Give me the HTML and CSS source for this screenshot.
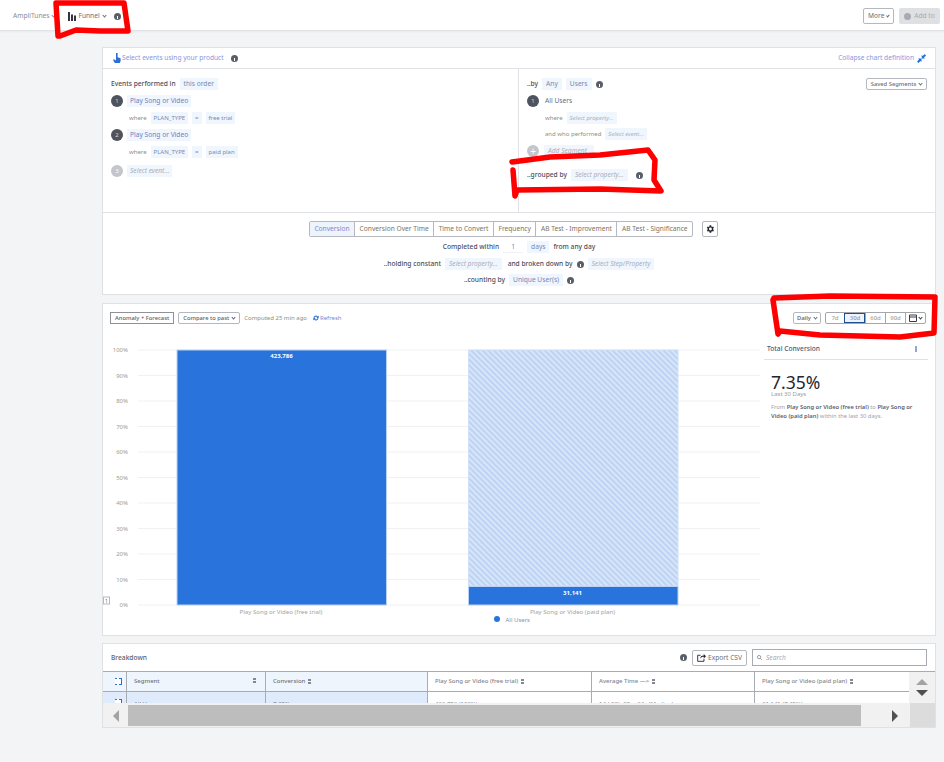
FILE: index.html
```html
<!DOCTYPE html>
<html lang="en">
<head>
<meta charset="utf-8">
<title>Funnel</title>
<link rel="stylesheet" href="styles.css">
</head>
<body>
<header class="topbar">
  <div class="crumbs">
    <span class="crumb">AmpliTunes <i class="caret"></i></span>
    <span class="crumb crumb-main">
      <svg class="funnel-ico" width="8" height="9" viewBox="0 0 8 9"><rect x="0" y="0" width="2" height="9" fill="#33363f"/><rect x="3" y="2.500" width="2" height="6.500" fill="#33363f"/><rect x="6" y="3.500" width="2" height="5.500" fill="#33363f"/></svg>
      Funnel <i class="caret"></i>
    </span>
    <span class="info"></span>
  </div>
  <div class="top-actions">
    <button class="btn btn-more">More <i class="caret"></i></button>
    <button class="btn btn-add"><span class="plus-dot"></span>Add to</button>
  </div>
</header>

<main class="main">
  <section class="card def">
    <div class="def-head">
      <div class="hint">
        <svg width="8" height="10" viewBox="0 0 8 10"><path d="M3 0h1.600v4.200l3 1V8.200L6.800 10H1.800L0 6.800l1-.6 2 1.400z" fill="#2a6fd6"/></svg>
        <span>Select events using your product</span>
        <span class="info hint-info"></span>
      </div>
      <div class="collapse">
        <span>Collapse chart definition</span>
        <svg width="9" height="9" viewBox="0 0 9 9"><path d="M0 7.500l2-2-1-1h3.500V8l-1-1-2 2zM9 1.500l-2 2 1 1H4.700V1l1 1 2-2z" fill="#2a6fd6"/></svg>
      </div>
    </div>
    <div class="def-body">
      <div class="events">
        <div class="line line-title"><b class="lbl">Events performed in</b><span class="chip">this order</span></div>
        <div class="step"><span class="num">1</span><span class="chip chip-lg">Play Song or Video</span></div>
        <div class="where"><em class="kw">where</em><span class="chip chip-sm">PLAN_TYPE</span><span class="chip chip-sm">=</span><span class="chip chip-sm">free trial</span></div>
        <div class="step"><span class="num">2</span><span class="chip chip-lg">Play Song or Video</span></div>
        <div class="where"><em class="kw">where</em><span class="chip chip-sm">PLAN_TYPE</span><span class="chip chip-sm">=</span><span class="chip chip-sm">paid plan</span></div>
        <div class="step step-off"><span class="num num-off">3</span><span class="chip chip-lg chip-ghost">Select event...</span></div>
      </div>
      <div class="segments">
        <div class="seg-top">
          <div class="line line-title"><b class="lbl">..by</b><span class="chip">Any</span><span class="chip">Users</span><span class="info"></span></div>
          <button class="btn btn-saved">Saved Segments <i class="caret"></i></button>
        </div>
        <div class="step step-user"><span class="num">1</span><span class="plain">All Users</span></div>
        <div class="where where-seg"><em class="kw">where</em><span class="chip chip-sm chip-ghost">Select property...</span></div>
        <div class="where where-seg"><em class="kw">and who performed</em><span class="chip chip-sm chip-ghost">Select event...</span></div>
        <div class="step step-add"><span class="num num-off num-plus">+</span><span class="chip chip-lg chip-ghost chip-add">Add Segment</span></div>
        <div class="line line-group"><b class="lbl">..grouped by</b><span class="chip chip-ghost chip-prop">Select property...</span><span class="info"></span></div>
      </div>
    </div>
    <div class="def-foot">
      <div class="tabs-row">
        <div class="tabs">
          <span class="tab tab-on">Conversion</span><span class="tab">Conversion Over Time</span><span class="tab">Time to Convert</span><span class="tab">Frequency</span><span class="tab">AB Test - Improvement</span><span class="tab">AB Test - Significance</span>
        </div>
        <button class="btn btn-cog"><svg width="10" height="10" viewBox="0 0 24 24"><path fill="#23262e" d="M19.400 13a7.500 7.500 0 0 0 0-2l2.100-1.600-2-3.500-2.500 1a7.500 7.500 0 0 0-1.700-1L15 3.200h-4l-.4 2.700a7.500 7.500 0 0 0-1.700 1l-2.500-1-2 3.500L6.500 11a7.500 7.500 0 0 0 0 2l-2.100 1.600 2 3.500 2.500-1a7.500 7.500 0 0 0 1.700 1l.4 2.700h4l.4-2.700a7.500 7.500 0 0 0 1.700-1l2.500 1 2-3.500zM13 15.500a3.500 3.500 0 1 1 0-7 3.500 3.500 0 0 1 0 7z"/></svg></button>
      </div>
      <div class="foot-line line-a"><b class="lbl">Completed within</b><span class="num-input">1</span><span class="chip">days</span><b class="lbl">from any day</b></div>
      <div class="foot-line line-b"><b class="lbl">..holding constant</b><span class="chip chip-ghost">Select property...</span><b class="lbl lbl-gap">and broken down by</b><span class="info"></span><span class="chip chip-ghost">Select Step/Property</span></div>
      <div class="foot-line line-c"><b class="lbl">..counting by</b><span class="chip">Unique User(s)</span><span class="info"></span></div>
    </div>
  </section>

  <section class="card result">
    <div class="toolbar">
      <div class="tool-left">
        <button class="btn btn-tool">Anomaly + Forecast</button>
        <button class="btn btn-tool btn-light">Compare to past <i class="caret"></i></button>
        <span class="computed">Computed 25 min ago</span>
        <span class="refresh"><svg width="6" height="6" viewBox="0 0 10 10"><path d="M1 5a4 4 0 0 1 7-2.600L9.500 1v4h-4l1.400-1.400A2.500 2.500 0 0 0 2.500 5zM9 5a4 4 0 0 1-7 2.600L.5 9V5h4L3.100 6.400A2.500 2.500 0 0 0 7.500 5z" fill="#2a6fd6"/></svg>Refresh</span>
      </div>
      <div class="tool-right">
        <button class="btn btn-daily">Daily <i class="caret"></i></button>
        <div class="ranges">
          <span class="range">7d</span><span class="range range-on">30d</span><span class="range">60d</span><span class="range">90d</span><span class="range range-cal"><svg width="8" height="8" viewBox="0 0 8 8"><path d="M.5 1h7v6.500h-7zM.5 3h7" fill="none" stroke="#3a3d47"/></svg><i class="caret"></i></span>
        </div>
      </div>
    </div>
    <div class="chart-row">
      <svg class="chart" width="660" height="288" viewBox="0 0 660 288">
        <defs>
          <pattern id="hatch" width="4" height="4" patternUnits="userSpaceOnUse" patternTransform="rotate(45)">
            <rect width="4" height="4" fill="#bcd3f4"/>
            <rect width="4" height="2" fill="#d8e5f9"/>
          </pattern>
        </defs>
        <g class="grid">
          <line x1="35" x2="657" y1="10" y2="10"/><line x1="35" x2="657" y1="35.500" y2="35.500"/><line x1="35" x2="657" y1="61" y2="61"/><line x1="35" x2="657" y1="86.500" y2="86.500"/><line x1="35" x2="657" y1="112" y2="112"/><line x1="35" x2="657" y1="137.500" y2="137.500"/><line x1="35" x2="657" y1="163" y2="163"/><line x1="35" x2="657" y1="188.500" y2="188.500"/><line x1="35" x2="657" y1="214" y2="214"/><line x1="35" x2="657" y1="239.500" y2="239.500"/><line x1="35" x2="657" y1="265" y2="265"/>
        </g>
        <g class="ylab">
          <text x="25" y="12">100%</text><text x="25" y="37.500">90%</text><text x="25" y="63">80%</text><text x="25" y="88.500">70%</text><text x="25" y="114">60%</text><text x="25" y="139.500">50%</text><text x="25" y="165">40%</text><text x="25" y="190.500">30%</text><text x="25" y="216">20%</text><text x="25" y="241.500">10%</text><text x="25" y="267">0%</text>
        </g>
        <rect x="74" y="10" width="209.500" height="255" fill="#2874dc" stroke="#b9d2f3"/>
        <rect x="365.500" y="10" width="209.500" height="236" fill="url(#hatch)" stroke="#cfe0f7"/>
        <rect x="365.500" y="246.500" width="209.500" height="18.500" fill="#2874dc" stroke="#b9d2f3"/>
        <text class="bar-val" x="178.500" y="18">423,786</text>
        <text class="bar-val" x="469.500" y="255">31,141</text>
        <text class="xlab" x="178" y="274">Play Song or Video (free trial)</text>
        <text class="xlab" x="469.500" y="274">Play Song or Video (paid plan)</text>
        <circle cx="394" cy="279" r="3" fill="#2874dc"/>
        <text class="legend" x="402.500" y="282">All Users</text>
        <rect class="pager" x="0.500" y="257" width="6" height="7"/>
        <text class="pager-t" x="3.500" y="263">1</text>
      </svg>
      <aside class="side">
        <div class="side-head"><b class="side-title">Total Conversion</b><span class="kebab"></span></div>
        <div class="side-body">
          <div class="big">7.35%</div>
          <div class="last">Last 30 Days</div>
          <p class="desc">From <b>Play Song or Video (free trial)</b> to <b>Play Song or</b><br><b>Video (paid plan)</b> within the last 30 days.</p>
        </div>
      </aside>
    </div>
  </section>

  <section class="card breakdown">
    <div class="bd-head">
      <b class="bd-title">Breakdown</b>
      <div class="bd-tools">
        <span class="info"></span>
        <button class="btn btn-export"><svg width="9" height="9" viewBox="0 0 10 10"><path d="M4 2.500H.75v6.750h7V6.500" fill="none" stroke="#23262e"/><path d="M3.500 6.500c0-2.500 1.500-3.800 4-3.800V1L10 3.500 7.500 6V4.300c-1.800 0-3 .7-4 2.200z" fill="#23262e"/></svg>Export CSV</button>
        <div class="search"><svg width="5" height="5" viewBox="0 0 6 6"><circle cx="2.500" cy="2.500" r="2" fill="none" stroke="#8a8e99"/><path d="M4 4l2 2" stroke="#8a8e99"/></svg><span>Search</span></div>
      </div>
    </div>
    <div class="table-wrap">
      <div class="tbl">
        <div class="tr tr-head">
          <span class="td"></span>
          <span class="td td-box"><i class="expand"></i></span>
          <span class="td td-seg">Segment<i class="sort sort-end"></i></span>
          <span class="td">Conversion<i class="sort"></i></span>
          <span class="td td-white">Play Song or Video (free trial)<i class="sort"></i></span>
          <span class="td td-white">Average Time &#8212;&gt;<i class="sort"></i></span>
          <span class="td td-white">Play Song or Video (paid plan)<i class="sort"></i></span>
        </div>
        <div class="tr tr-row">
          <span class="td"></span>
          <span class="td td-box"><i class="expand"></i></span>
          <span class="td">All Users</span>
          <span class="td">7.35%</span>
          <span class="td td-white">423,786 (100%)</span>
          <span class="td td-white">14d 00h 05m 34s (Median)</span>
          <span class="td td-white">31,141 (7.35%)</span>
        </div>
      </div>
      <div class="vscroll"><i class="arrow-up"></i><i class="arrow-down"></i></div>
      <div class="hscroll">
        <span class="hs-left"><i class="arrow-left"></i></span>
        <span class="hs-thumb"></span>
        <span class="hs-right"><i class="arrow-right"></i></span>
        <span class="hs-corner"></span>
      </div>
    </div>
  </section>
</main>

<svg class="marks" width="944" height="762" viewBox="0 0 944 762" aria-hidden="true">
  <path d="M58 36L56 3 L124 3 L128 31 L100 31 L76 30 L60 36"/>
  <path d="M512 162 L550 157 L600 155 L648 150 L655 160 L654 180 L661 191 L600 189 L517 190 L515 196 L513 170"/>
  <path d="M774 298 L830 296 L935 297 L934 333 L900 337 L820 335 L780 331 L778 334 L773 300"/>
</svg>
</body>
</html>
```

FILE: styles.css
```css
* { box-sizing: border-box; }
html, body { margin: 0; padding: 0; }
body {
  width: 944px; height: 762px; overflow: hidden; position: relative;
  background: #f3f4f6; color: #4a4e5a;
  font-family: "Noto Sans", "Open Sans", sans-serif; font-size: 6.650px; line-height: 10px;
}
button { font-family: inherit; margin: 0; cursor: pointer; }
b { font-weight: 500; }
em { font-style: normal; }

.topbar {
  height: 31px; background: #fff; border-bottom: 1px solid #e1e3e7;
  box-shadow: 0 1px 2px rgba(0,0,0,.05);
  display: flex; justify-content: space-between; align-items: center;
  padding: 2px 4px 0 13px;
}
.crumbs { display: flex; align-items: center; }
.crumb { color: #8a8d96; display: inline-flex; align-items: center; gap: 2px; }
.crumb-main { color: #6b6e78; margin-left: 13px; gap: 2px; }
.crumbs .info { margin-left: 8px; }
.top-actions { display: flex; gap: 5px; }

.caret {
  display: inline-block; width: 3px; height: 3px; margin: -2px 0 0 1px;
  border-right: 1px solid currentColor; border-bottom: 1px solid currentColor;
  transform: rotate(45deg);
}
.info {
  display: inline-block; width: 7px; height: 7px; border-radius: 50%;
  background: #5a5e68; position: relative; flex: none;
}
.info::after {
  content: ""; position: absolute; left: 3px; top: 3px; width: 1px; height: 3px; background: #fff;
}

.btn {
  background: #fff; border: 1px solid #b5b8bf; border-radius: 2px; color: #6b6e78;
  font-size: 6.650px; line-height: 10px; padding: 0 4px; white-space: nowrap;
  display: inline-flex; align-items: center; justify-content: center; gap: 2px;
}
.btn-more { width: 31px; height: 16px; }
.btn-add { width: 41px; height: 16px; padding: 0; background: #dfe0e3; border-color: #dfe0e3; color: #a8aab0; gap: 3px; }
.plus-dot { width: 7px; height: 7px; border-radius: 50%; background: #a8aab0; }

.main { width: 834px; margin: 16px 0 0 102px; display: flex; flex-direction: column; gap: 8px; }
.card { background: #fff; border: 1px solid #dfe1e5; }

.def { height: 248px; }
.def-head {
  height: 21px; border-bottom: 1px solid #dfe1e5; display: flex; justify-content: space-between;
  align-items: center; padding: 0 9px 0 10px;
}
.hint, .collapse { display: flex; align-items: center; gap: 1px; color: #8a97dc; }
.collapse { gap: 3px; }
.hint-info { margin-left: 6px; }
.def-body { height: 144px; display: flex; border-bottom: 1px solid #dfe1e5; }
.events { width: 416px; padding: 9px 0 0 8px; border-right: 1px solid #dfe1e5; }
.segments { flex: 1; padding: 9px 8px 0 8px; }
.line { display: flex; align-items: center; gap: 4px; }
.line-title { height: 12px; }
.lbl { color: #4a4e5a; }
.chip {
  background: #f0f6fd; color: #7c87b5; padding: 0 4px; height: 12px; line-height: 12px;
  display: inline-block; white-space: nowrap;
}
.chip-lg { color: #6d7fc4; height: 12px; padding: 0 3px; }
.chip-sm { font-size: 6px; color: #7c87b5; padding: 0 3px; }
.chip-ghost { color: #a9aebb; font-style: italic; }
.step { display: flex; align-items: center; gap: 4px; height: 12px; margin-top: 5px; }
.num {
  width: 12px; height: 12px; border-radius: 50%; background: #4f535e; color: #d5d7db;
  text-align: center; line-height: 12px; font-size: 6px; flex: none;
}
.num-off { background: #c4c6cb; color: #fff; }
.num-plus { font-size: 10px; }
.plain { color: #6b6e78; }
.step-user { gap: 6px; }
.where { display: flex; align-items: center; gap: 4px; height: 12px; margin: 5px 0 0 18px; }
.kw { font-size: 6px; color: #8d8f82; }
.step-off { margin-top: 7px; }
.seg-top { display: flex; justify-content: space-between; align-items: center; height: 12px; }
.btn-saved { height: 12px; width: 61px; padding: 0; font-size: 5.800px; font-weight: 500; }
.where-seg { margin-top: 5px; }
.where-seg + .where-seg { margin-top: 4px; }
.step-add { margin-top: 5px; gap: 5px; }
.chip-add { padding: 0 4px; width: 50px; }
.line-group { margin-top: 12px; height: 12px; }
.chip-prop + .info { margin-left: 4px; }

.def-foot { padding-top: 8px; }
.tabs-row { display: flex; justify-content: center; gap: 9px; height: 16px; padding-right: 11px; }
.tabs { display: flex; border: 1px solid #b5b8bf; border-radius: 2px; height: 16px; }
.tab {
  padding: 0 4.500px; line-height: 14px; color: #7a7466; border-left: 1px solid #b5b8bf; white-space: nowrap;
}
.tab:first-child { border-left: 0; }
.tab-on { background: #eef4fc; color: #7c8ad0; }
.btn-cog { width: 16px; height: 16px; padding: 0; }
.foot-line { display: flex; justify-content: center; align-items: center; gap: 4px; height: 12px; }
.line-a { margin-top: 4px; }
.num-input { width: 20px; text-align: center; color: #7c8ad0; border-bottom: 1px solid #eef1f6; height: 12px; line-height: 12px; }
.line-b { margin-top: 5px; }
.lbl-gap { margin-left: 2px; }
.line-c { margin-top: 4px; }

.result { height: 333px; }
.toolbar { display: flex; justify-content: space-between; align-items: center; height: 12px; margin-top: 8px; padding: 0 9px 0 7px; }
.tool-left, .tool-right { display: flex; align-items: center; }
.tool-left { gap: 4px; }
.btn-tool { height: 12px; padding: 0 4px; font-size: 5.800px; font-weight: 500; color: #5d606b; border-color: #8e9198; border-radius: 0; }
.btn-light { border-color: #b5b8bf; border-radius: 2px; }
.computed { font-size: 6px; color: #8d8f82; }
.refresh { font-size: 6px; color: #7c8ad0; display: inline-flex; align-items: center; gap: 1px; margin-left: 2px; }
.tool-right { gap: 4px; }
.btn-daily { height: 12px; width: 28px; padding: 0; font-size: 5.800px; font-weight: 600; }
.ranges { display: flex; border: 1px solid #a3a6ad; border-radius: 2px; height: 12px; }
.range {
  width: 20px; text-align: center; line-height: 10px; font-size: 6px; font-weight: 500; color: #a8a396;
  border-left: 1px solid #a3a6ad;
}
.range:first-child { border-left: 0; width: 18px; }
.range-on { width: 21px; background: #eef4fc; color: #8b97c4; outline: 1px solid #1f4f93; outline-offset: -1px; }
.range-cal { display: inline-flex; align-items: center; justify-content: center; gap: 1px; color: #3a3d47; }

.chart-row { display: flex; }
.chart { display: block; margin-top: 16px; flex: none; }
.grid line { stroke: #f0f1f3; }
.ylab text { font-size: 6px; text-anchor: end; fill: #a19b8a; font-family: "Noto Sans", sans-serif; }
.bar-val { font-size: 6px; font-weight: 700; fill: #fff; text-anchor: middle; font-family: "Noto Sans", sans-serif; }
.xlab { font-size: 6.100px; fill: #a5a39e; text-anchor: middle; font-family: "Noto Sans", sans-serif; }
.legend { font-size: 6px; fill: #8f9299; font-family: "Noto Sans", sans-serif; }
.pager { fill: #fff; stroke: #b5b8bf; }
.pager-t { font-size: 5px; fill: #666; text-anchor: middle; font-family: "Noto Sans", sans-serif; }

.side { width: 164px; margin: 19px 0 0 1px; }
.side-head { height: 17px; border-bottom: 1px solid #dfe1e5; display: flex; justify-content: space-between; padding: 1px 11px 0 3px; }
.side-title { color: #4a5a78; }
.kebab { width: 2px; height: 6px; background: #8ea8d8; margin-top: 2px; }
.side-body { padding: 14px 6px 0 7px; }
.big { font-size: 17.500px; line-height: 17px; color: #23262e; }
.last { font-size: 6px; line-height: 6px; color: #9a9ca3; }
.desc { margin: 6px 0 0; font-size: 5.800px; line-height: 8.500px; color: #a0a2a8; }
.desc b { font-weight: 600; color: #5d606b; }

.breakdown { height: 85px; margin-top: -1px; }
.bd-head { height: 27px; display: flex; justify-content: space-between; align-items: center; padding: 0 8px; }
.bd-title { color: #5b5f6a; font-weight: 500; }
.bd-tools { display: flex; align-items: center; gap: 5px; }
.btn-export { width: 55px; height: 16px; padding: 0; gap: 2px; color: #6b6e78; }
.search {
  width: 175px; height: 17px; border: 1px solid #a8abb3; display: flex; align-items: center;
  gap: 4px; padding-left: 4px; font-style: italic; color: #a4a8b2;
}
.table-wrap { position: relative; height: 56px; overflow: hidden; border-top: 1px solid #a8abb3; }
.tbl { width: 832px; }
.tr { display: grid; grid-template-columns: 8px 16px 139px 162px 164px 163px 180px; }
.tr-head { height: 20px; border-bottom: 1px solid #a8abb3; }
.tr-row { height: 14px; }
.td {
  border-right: 1px solid #a8abb3; padding: 0 7px; background: #eff5fd; color: #6f727c;
  font-size: 6px; font-weight: 500; line-height: 19px; white-space: nowrap; position: relative;
  display: flex; align-items: center;
}
.tr-row .td { background: #dfebfb; padding-top: 8px; align-items: flex-start; line-height: 8px; font-weight: 400; }
.tr-row .td-white { background: #fff; }
.td-white { background: #fff; color: #83868f; }
.td-box { padding: 0; justify-content: center; }
.tr-row .td-box { padding: 7px 0 0; align-items: flex-start; justify-content: center; }
.expand {
  width: 7px; height: 7px; display: block; background-color: #fff;
  border-right: 1px solid #2c6fd4;
  background-image: linear-gradient(#2c6fd4, #2c6fd4), linear-gradient(#2c6fd4, #2c6fd4), linear-gradient(#2c6fd4, #2c6fd4), linear-gradient(#2c6fd4, #2c6fd4);
  background-size: 2px 1px;
  background-position: left top, right top, left bottom, right bottom;
  background-repeat: no-repeat;
}
.sort {
  width: 3px; height: 5px; margin-left: 3px; display: inline-block; flex: none;
  background: linear-gradient(#858891 0 2px, transparent 2px 3px, #858891 3px);
}
.sort-end { position: absolute; right: 9px; top: 6px; }

.vscroll {
  position: absolute; right: 0; top: 0; width: 26px; height: 32px; background: #f1f1f1;
  display: flex; flex-direction: column; align-items: center; padding-top: 7px; gap: 5px;
}
.arrow-up { width: 0; height: 0; border: 6px solid transparent; border-top: 0; border-bottom: 6px solid #a3a3a3; }
.arrow-down { width: 0; height: 0; border: 6px solid transparent; border-bottom: 0; border-top: 6px solid #505050; }
.hscroll {
  position: absolute; left: 0; right: 0; top: 31px; height: 25px; background: #f1f1f1;
  display: grid; grid-template-columns: 25px 733px 49px 25px; align-items: center;
}
.hs-left { display: flex; justify-content: center; }
.hs-right { display: flex; justify-content: center; padding-left: 18px; }
.hs-thumb { height: 21px; background: #bdbdbd; }
.hs-corner { height: 25px; background: #dcdcdc; }
.arrow-left { width: 0; height: 0; border: 6px solid transparent; border-left: 0; border-right: 6px solid #a3a3a3; }
.arrow-right { width: 0; height: 0; border: 6px solid transparent; border-right: 0; border-left: 6px solid #505050; }

.marks { position: absolute; left: 0; top: 0; pointer-events: none; }
.marks path { fill: none; stroke: #ff0000; stroke-width: 5.500; stroke-linejoin: round; stroke-linecap: round; }
```
